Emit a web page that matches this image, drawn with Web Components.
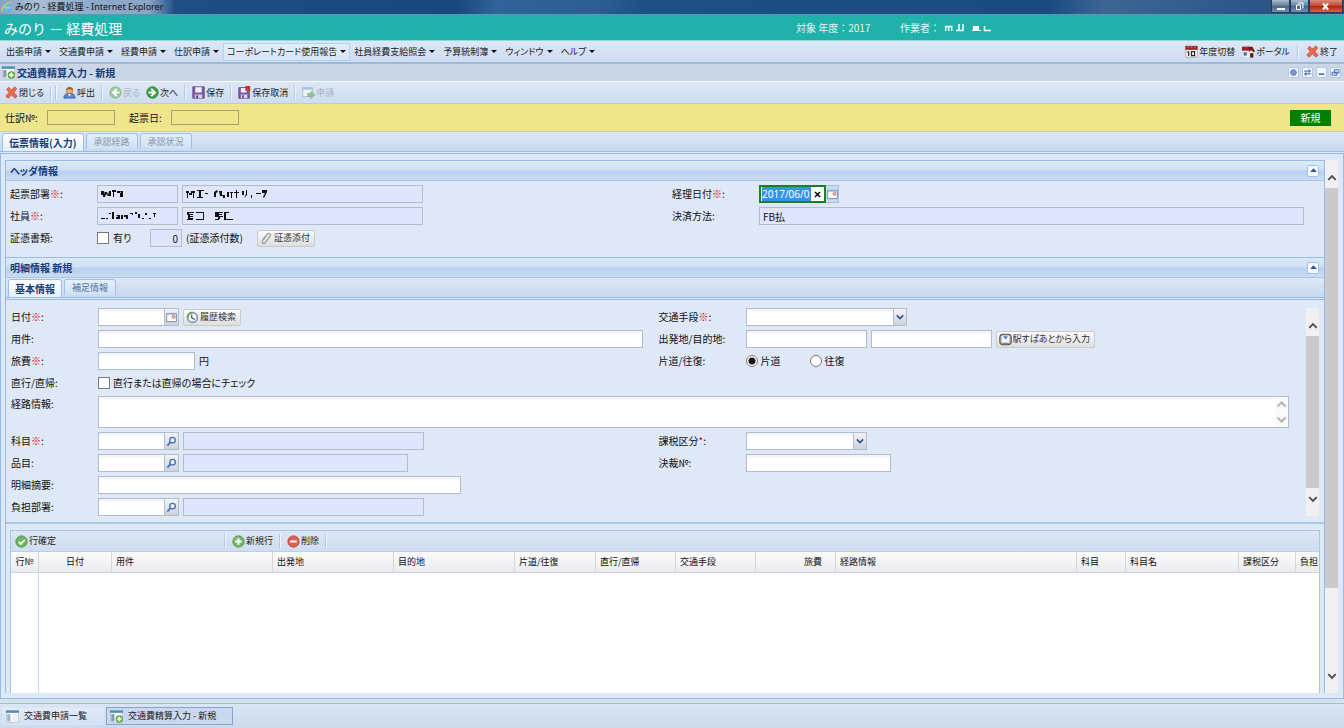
<!DOCTYPE html>
<html lang="ja">
<head>
<meta charset="utf-8">
<title>みのり - 経費処理</title>
<style>
html, body { margin: 0; height: 100%; }
body { font: 9px/12px "Noto Sans CJK JP", sans-serif; font-feature-settings: "palt"; color: #222; background: #d3e1f1; }
</style>
</head>
<body>
<expense-app></expense-app>

<script>
const BASE = `
  *, *::before, *::after { box-sizing: border-box; }
  :host { display: block; }
  :host([hidden]) { display: none; }
  button, input, select, textarea { font: inherit; color: inherit; margin: 0; border-radius: 0; font-feature-settings: inherit; }
  button { background: none; border: 0; padding: 0; display: flex; align-items: center; white-space: nowrap; }
`;
function define(name, css, html) {
  customElements.define(name, class extends HTMLElement {
    constructor() {
      super();
      const t = document.createElement('template');
      t.innerHTML = `<style>${BASE}${css}</style>` + (typeof html === 'function' ? html(this) : html);
      this.attachShadow({ mode: 'open' }).append(t.content.cloneNode(true));
    }
  });
}

/* ---------- icons, drawn on a 16 unit square ---------- */
const ICONS = {
  ie: '<circle cx="8" cy="9" r="5" fill="none" stroke="#5db9ea" stroke-width="2.6"/><path d="M4 9h9" stroke="#8ed3f4" stroke-width="2"/><path d="M1 14C-1 10 9 0 15 2" fill="none" stroke="#e8c34a" stroke-width="1.6"/>',
  cross: '<path d="M2 4l2.500-2.500L8 5l4-4 2.500 2.500L11 8l4 4.500-2.500 2.500L8 11l-4 4-3-2.500L5 8z" fill="#ea6a4e" stroke="#c4402c" stroke-width=".8"/>',
  user: '<path d="M1 15c0-4 2-6 7-6s7 2 7 6z" fill="#5586c8" stroke="#345f9c" stroke-width=".8"/><circle cx="8" cy="5.500" r="4" fill="#efb27a" stroke="#99602c" stroke-width=".8"/><path d="M3.800 5C4 1 12 0 12.300 5 9 5 8 3 3.800 5z" fill="#a35a22"/><path d="M6 10l2 3 2-3z" fill="#fff"/>',
  back: '<circle cx="8" cy="8" r="7" fill="#9bc79d" stroke="#89b58b"/><path d="M9.500 3.500L5 8l4.500 4.500M5.500 8H13" fill="none" stroke="#fff" stroke-width="2.400"/>',
  next: '<circle cx="8" cy="8" r="7" fill="#3fa345" stroke="#26752c"/><path d="M6.500 3.500L11 8l-4.500 4.500M10.500 8H3" fill="none" stroke="#fff" stroke-width="2.400"/>',
  save: '<path d="M1 1h14v14H1z" fill="#7d5ca6" stroke="#5d3f86"/><path d="M4 1.500h8V8H4z" fill="#f1edf8"/><path d="M3.500 10.500h9V15h-9z" fill="#d9d5e6"/><path d="M5 11.500h2.500V15H5z" fill="#5d3f86"/>',
  unsave: '<path d="M1 2h13v13H1z" fill="#7d5ca6" stroke="#5d3f86"/><path d="M3.500 2.500h7V8h-7z" fill="#f1edf8"/><path d="M3.500 10.500h8V15h-8z" fill="#d9d5e6"/><path d="M5 11.500h2V15H5z" fill="#5d3f86"/><path d="M9 0h6v7l-3-2-3 1z" fill="#cf3030"/>',
  apply: '<path d="M1 2h12v11H1z" fill="#eef3fa" stroke="#a5b7d0"/><path d="M1 2h12v2.500H1z" fill="#a9c1de"/><path d="M7 9h4V6.500l5 4.500-5 4.500V13H7z" fill="#93c191" stroke="#79a878" stroke-width=".6"/>',
  list: '<path d="M.500 1h15v14H.500z" fill="#fbfcfe" stroke="#b4c3d6"/><path d="M0 .500h16v3H0z" fill="#4c8eae"/><path d="M1.500 5h4v9h-4z" fill="#a4b4c8"/><path d="M8 5h6v9H8z" fill="#eceff4"/>',
  listadd: '<path d="M.500 1h15v14H.500z" fill="#fbfcfe" stroke="#b4c3d6"/><path d="M0 .500h16v3H0z" fill="#4c8eae"/><path d="M1.500 5h4v9h-4z" fill="#8599b5"/><circle cx="11.500" cy="11" r="4.300" fill="#77bb55" stroke="#4e9138" stroke-width=".8"/><path d="M11.500 8.300v5.400M8.800 11h5.400" stroke="#fff" stroke-width="1.800"/>',
  calendar: '<path d="M1 2h14v13H1z" fill="#fff" stroke="#a99"/><path d="M.500 1h15v5H.500z" fill="#a32129"/><path d="M3 2.500h2M7 2.500h2M11 2.500h2" stroke="#e9a3a5"/><path d="M4.500 8v5.500M3 8.800l1.500-.8M8 8.200h3.800v5H8z" fill="none" stroke="#222" stroke-width="1.500"/>',
  portal: '<path d="M1 7h14v8H1z" fill="#f1ecea"/><path d="M0 2h9v5H0z" fill="#a0202c"/><path d="M8 2h5l3 6-2 1-3-3-2 3z" fill="#7c1822"/><path d="M2 9h4v4H2z" fill="#4b6fa6"/><path d="M10 10h4v5.500h-4z" fill="#5a1c1c"/>',
  gear: '<circle cx="8" cy="8" r="5" fill="#8293d2" stroke="#6278bd" stroke-width="2.400" stroke-dasharray="2 1"/>',
  swap: '<path d="M2 5.500h9M5 10.500h9" stroke="#5379b8" stroke-width="2"/><path d="M10 1.500l4.500 4-4.500 4zM6 6.500l-4.500 4 4.500 4z" fill="#5379b8"/>',
  min: '<path d="M3 9.500h10v3H3z" fill="#4e70b4"/>',
  restore: '<path d="M6 3h8v6H6zM2 7.500h8.500V13H2z" fill="#dfe9f8" stroke="#4e70b4" stroke-width="1.800"/>',
  collapse: '<path d="M8 4l6 6.500H2z" fill="#2d559d"/>',
  clip: '<path d="M3 10l6-7.500c2-2 5 0 3.500 2.500l-6 8c-1.500 2-5 .5-3.500-2l5-6.500" fill="none" stroke="#9c9c9c" stroke-width="1.600"/>',
  history: '<circle cx="8" cy="8" r="6" fill="#f6f9fc" stroke="#7f9eb4" stroke-width="2.200"/><path d="M2 8a6 6 0 0 1 6-6" fill="none" stroke="#62a657" stroke-width="2.600"/><path d="M7 4.500v4l4 2" fill="none" stroke="#45586c" stroke-width="1.500"/>',
  train: '<rect x="1" y="1.500" width="14" height="13" rx="4" fill="#bdbdbd" stroke="#4f4f4f" stroke-width="1.400"/><path d="M3.500 3.500h9v8h-9z" fill="#f5f7fa"/><path d="M5 4h6l-3 4z" fill="#4c7bb4"/><path d="M4 13h8" stroke="#777"/>',
  date: '<path d="M1 2h14v12H1z" fill="#fff" stroke="#7488ac" stroke-width="1.400"/><path d="M1.500 3h13" stroke="#9db3d4" stroke-width="2"/><circle cx="11" cy="7" r="2.200" fill="#f4c9c9" stroke="#b84848"/>',
  search: '<circle cx="9.500" cy="6" r="4" fill="#e9f3fd" stroke="#4674b1" stroke-width="2"/><path d="M6.500 9L2 14" stroke="#4674b1" stroke-width="2.600"/>',
  ok: '<circle cx="8" cy="8" r="7" fill="#6cb65f" stroke="#4b8f45"/><path d="M4.500 8.500l2.500 2.500 5-5" fill="none" stroke="#fff" stroke-width="2.200"/>',
  add: '<circle cx="8" cy="8" r="7" fill="#76b86b" stroke="#4b8f45"/><path d="M8 4v8M4 8h8" stroke="#fff" stroke-width="2.400"/>',
  remove: '<circle cx="8" cy="8" r="7" fill="#dd6156" stroke="#b2453e"/><path d="M4 8h8" stroke="#fff" stroke-width="2.600"/>',
  up: '<path d="M3 10.500l5-5 5 5" fill="none" stroke="currentColor" stroke-width="2.600"/>',
  down: '<path d="M3 5.500l5 5 5-5" fill="none" stroke="currentColor" stroke-width="2.600"/>',
  times: '<path d="M3.500 3.500l9 9M12.500 3.500l-9 9" stroke="currentColor" stroke-width="2.600"/>',
};
define('ui-icon', `
  :host { width: var(--icon, 13px); height: var(--icon, 13px); flex: none; }
  svg { display: block; width: 100%; height: 100%; }
`, host => `<svg viewBox="0 0 16 16" aria-hidden="true"></svg>`);
/* Icon bodies depend on the name attribute, so they are filled in once the tree is built. */
function paintIcons(root) {
  root.querySelectorAll('*').forEach(el => {
    if (el.localName === 'ui-icon') el.shadowRoot.querySelector('svg').innerHTML = ICONS[el.getAttribute('name')] || '';
    if (el.shadowRoot) paintIcons(el.shadowRoot);
  });
}

/* ---------- browser title bar ---------- */
define('app-titlebar', `
  :host { display: flex; justify-content: space-between; height: 15px; border-bottom: 1px solid #5f97ae;
    background: linear-gradient(100deg, #23508a 0, #1a4780 34%, #30639b 37%, #2b5c95 45%, #1b4f86 48%, #1a4b80 78%, #3d6695 82%, #1f4d80 100%); }
  .title { display: flex; align-items: center; gap: 2px; padding: 0 12px 0 1px; color: #111; --icon: 12px;
    font-family: "Noto Sans", "Noto Sans CJK JP", sans-serif;
    background: linear-gradient(90deg, #86a2c4, #a9bdd6 20%, #8fa9c9 55%, #8aa5c6 85%, transparent); }
  .controls { display: flex; height: 13px; padding-right: 1px; }
  .controls button { width: 19px; justify-content: center; color: #fff; border: 1px solid #263c5c; border-top: 0;
    background: linear-gradient(#a9bccf, #5f7b9a 50%, #46658b 51%, #7391b0); --icon: 10px; }
  .controls .close { width: 34px; background: linear-gradient(#dc8c7c, #c1442f 50%, #a72411 51%, #d06a4a); }
  svg { width: 10px; height: 9px; }
`, `
  <div class="title"><ui-icon name="ie"></ui-icon><span>みのり - 経費処理 - Internet Explorer</span></div>
  <div class="controls">
    <button aria-label="最小化"><svg viewBox="0 0 10 9"><path d="M1 6h8v2H1z" fill="#fff"/></svg></button>
    <button aria-label="元に戻す"><svg viewBox="0 0 10 9"><path d="M3 1h5v5H7M1.500 3h4v4.500h-4z" fill="none" stroke="#fff"/></svg></button>
    <button class="close" aria-label="閉じる"><svg viewBox="0 0 10 9"><path d="M2 1.500l5 6M7 1.500l-5 6" stroke="#fff" stroke-width="2"/></svg></button>
  </div>`);

/* ---------- teal application banner ---------- */
define('app-banner', `
  :host { display: grid; grid-template-columns: 796fr 104fr 444fr; align-items: center; height: 26px; background: #20b2aa;
    color: #fff; border-bottom: 1px solid #8fd8dc; font-feature-settings: normal; }
  h1 { margin: 0; padding-left: 4px; font-weight: 400; font-size: 14px; line-height: 20px; }
  p { margin: 0; font-size: 10px; line-height: 14px; white-space: nowrap; color: #e4f7f5; display: flex; align-items: center; gap: 4px; }
  svg { width: 48px; height: 9px; }
`, `
  <h1>みのり － 経費処理</h1>
  <p>対象 年度：2017</p>
  <p>作業者：
    <svg viewBox="0 0 48 9" role="img" aria-label="作業者名"><g fill="none" stroke="#fff" stroke-width="1.500"><path d="M1.700 8V3.500h6V8M4.700 4v4M12 7.500h3V1M16 7.500h3V1"/><path d="M40.500 3v4.500H47"/></g><path d="M29 3h6v4h2v1h-9V7h1z" fill="#fff"/></svg>
  </p>`);

/* ---------- menus ---------- */
define('menu-item', `
  button { height: 18px; padding: 0 3px; gap: 3px; border: 1px solid transparent; }
  button::after { content: ""; border: 3px solid transparent; border-top-color: #111; border-bottom: 0; }
  :host([active]) button { border-color: #b4d0ee; background: linear-gradient(#e3eefb, #d5e5f8); }
`, '<button aria-haspopup="menu"><slot></slot></button>');

define('tool-button', `
  button { gap: 1px; height: 18px; }
  button:disabled { color: #a9b3c1; }
`, host => `<button ${host.hasAttribute('disabled') ? 'disabled' : ''}><ui-icon name="${host.getAttribute('icon')}"></ui-icon><span><slot></slot></span></button>`);

define('tool-sep', `
  :host { width: 2px; height: 14px; flex: none; border-left: 1px solid #afc8e6; border-right: 1px solid #f0f6fd; }
`, '');

define('app-menubar', `
  :host { display: flex; align-items: center; height: 23px; padding: 0 6px 0 2px; border-bottom: 2px solid #a0b8d8;
    background: linear-gradient(#dce8f6, #cedcf0); }
  .tools { margin-left: auto; display: flex; align-items: center; gap: 7px; }
`, `
  <menu-item>出張申請</menu-item><menu-item>交通費申請</menu-item><menu-item>経費申請</menu-item><menu-item>仕訳申請</menu-item>
  <menu-item active>コーポレートカード使用報告</menu-item><menu-item>社員経費支給照会</menu-item><menu-item>予算統制簿</menu-item>
  <menu-item>ウィンドウ</menu-item><menu-item>ヘルプ</menu-item>
  <div class="tools">
    <tool-button icon="calendar">年度切替</tool-button><tool-button icon="portal">ポータル</tool-button>
    <tool-sep></tool-sep><tool-button icon="cross">終了</tool-button>
  </div>`);

/* ---------- inner window ---------- */
define('window-header', `
  :host { display: flex; align-items: center; gap: 2px; height: 18px; padding: 0 3px 0 2px; background: #cbd6e7;
    border-bottom: 1px solid #f2f7fc; }
  h2 { margin: 0; font-size: 10px; line-height: 14px; font-weight: 700; color: #163c7c; }
  nav { margin-left: auto; display: flex; gap: 3px; --icon: 9px; }
  nav button { width: 11px; height: 11px; justify-content: center; background: #f3f8fe; border: 1px solid #adc8ea; border-radius: 2px; }
`, `
  <ui-icon name="listadd"></ui-icon><h2>交通費精算入力 - 新規</h2>
  <nav aria-label="ウィンドウ操作">
    <button aria-label="設定"><ui-icon name="gear"></ui-icon></button><button aria-label="更新"><ui-icon name="swap"></ui-icon></button>
    <button aria-label="最小化"><ui-icon name="min"></ui-icon></button><button aria-label="元に戻す"><ui-icon name="restore"></ui-icon></button>
  </nav>`);

define('window-toolbar', `
  :host { display: flex; align-items: center; gap: 6px; height: 22px; padding-left: 5px; border-bottom: 1px solid #c0cbd0;
    background: linear-gradient(#dde8f6, #cfdcef); }
  .pair { display: flex; gap: 3px; }
`, `
  <tool-button icon="cross">閉じる</tool-button><div class="pair"><tool-sep></tool-sep><tool-sep></tool-sep></div>
  <tool-button icon="user">呼出</tool-button><tool-sep></tool-sep>
  <tool-button icon="back" disabled>戻る</tool-button><tool-button icon="next">次へ</tool-button><tool-sep></tool-sep>
  <tool-button icon="save">保存</tool-button><tool-sep></tool-sep>
  <tool-button icon="unsave">保存取消</tool-button><tool-sep></tool-sep>
  <tool-button icon="apply" disabled>申請</tool-button>`);

define('voucher-strip', `
  :host { display: flex; align-items: center; height: 28px; padding: 0 13px 0 5px; background: #efe68c;
    border-bottom: 1px solid #c9cda8; font-size: 10px; color: #111; }
  label { width: 42px; }
  input { width: 68px; height: 15px; padding: 0 3px; border: 1px solid #a8a074; background: transparent; margin-right: 14px; }
  output { margin-left: auto; width: 41px; height: 16px; line-height: 15px; text-align: center; background: #008000; color: #fff; }
`, `
  <label for="no">仕訳№:</label><input id="no" readonly>
  <label for="day">起票日:</label><input id="day" readonly>
  <output>新規</output>`);

/* ---------- tabs ---------- */
define('tab-item', `
  button { height: 100%; padding: 0 7px; border: 1px solid #a0bfe4; border-bottom: 0; border-radius: 3px 3px 0 0;
    color: #8795a8; background: linear-gradient(#e4effb, #cfe0f4); }
  :host { height: 16px; }
  :host([sub]) button { color: #51729f; }
  :host([active]) { height: 18px; }
  :host([active]) button { padding: 0 6px; font-weight: 700; font-size: 10px; color: #163c7c; background: linear-gradient(#fff, #e4eefa); }
`, '<button role="tab"><slot></slot></button>');

define('tab-strip', `
  :host { display: flex; gap: 2px; align-items: flex-start; height: 22px; padding: 1px 2px 0; border-bottom: 3px double #99bbe8;
    background: linear-gradient(#dde7f5, #c9d9ee); }
`, '<slot></slot>');

/* ---------- collapsible panel ---------- */
define('section-panel', `
  :host { border: 1px solid #99bbe8; }
  header { display: flex; justify-content: space-between; align-items: center; height: 20px; padding: 0 5px 0 4px;
    border-bottom: 1px solid #a8c5e8; background: linear-gradient(#dceaf6, #cfe0f3 48%, #b8d0ee 52%, #cadcf3); }
  h3 { margin: 0; font-size: 10px; line-height: 14px; color: #163c7c; }
  header button { width: 12px; height: 12px; justify-content: center; background: #f5faff; border: 1px solid #a3c1e5; border-radius: 2px; --icon: 9px; }
`, `<header><h3><slot name="title"></slot></h3><button aria-label="折りたたむ"><ui-icon name="collapse"></ui-icon></button></header><slot></slot>`);

define('scroll-rail', `
  :host { display: flex; flex-direction: column; width: 13px; flex: none; background: #f0f0f0; color: #505050; }
  button { height: 28px; flex: none; justify-content: center; padding-top: 7px; --icon: 12px; }
  button:last-child { padding: 0 0 6px; }
  i { background: #cacaca; flex: var(--thumb, 1) 1 0; }
  b { flex: var(--rest, 0) 1 0; }
`, `<button aria-label="上へスクロール"><ui-icon name="up"></ui-icon></button><i></i><b></b><button aria-label="下へスクロール"><ui-icon name="down"></ui-icon></button>`);

/* ---------- form styles shared by both forms ---------- */
const FORM = `
  .grid { display: grid; gap: 4px 0; font-size: 10px; color: #111; }
  .row { display: flex; align-items: center; height: 18px; gap: 4px; min-width: 0; }
  .row > .cap { width: 87px; flex: none; margin-right: -4px; white-space: nowrap; }
  .req { color: #d00; }
  input:not([type=checkbox]):not([type=radio]), textarea, select { height: 18px; padding: 0 3px; border: 1px solid #b2bccf;
    background: #fff linear-gradient(#f0f1f4, #fff 4px); min-width: 0; outline: 0; }
  input[readonly]:not([type=checkbox]) { background: #dfe5fd; }
  input[type=checkbox], input[type=radio] { appearance: none; width: 12px; height: 12px; flex: none; border: 1px solid #777; background: #fff; }
  input[type=radio] { border-radius: 50%; }
  input[type=radio]:checked { background: radial-gradient(#111 3px, #fff 4px); }
  .w-code { width: 81px; } .w-mid { width: 121px; } .w-name { width: 241px; } .w-num { width: 32px; text-align: right; }
  .pick { display: flex; width: 81px; flex: none; }
  .pick input { width: 67px; }
  .pick button { width: 14px; height: 18px; justify-content: center; border: 1px solid #b2bccf; border-left: 0;
    background: linear-gradient(#f2f3f5, #cfd2d8); --icon: 11px; }
  .btn { height: 17px; padding: 0 4px 0 2px; gap: 1px; font-size: 9px; color: #333; border: 1px solid #c9c9c9; border-radius: 2px;
    background: linear-gradient(#fafafa, #dedede); }
  .masked { position: relative; display: flex; }
  .masked svg { position: absolute; left: 4px; top: 4px; height: 10px; pointer-events: none; }
`;

define('header-form', FORM + `
  :host { padding: 4px 20px 10px 4px; }
  .grid { grid-template-columns: calc(50% + 15px) 1fr; }
  .wide { flex: 1; }
  .focus { display: flex; width: 67px; height: 18px; border: 2px solid #1c7d2c; background: #fff; }
  .focus input:not([type=checkbox]):not([type=radio]) { width: 49px; height: 14px; padding: 0; margin-left: 1px; border: 0; background: #3393f0; color: #fff;
    font-family: "Noto Sans", sans-serif; line-height: 14px; }
  .focus button { flex: 1; height: 14px; justify-content: center; color: #000; --icon: 9px; }
  .focus + .pick { width: 13px; margin-left: -4px; }
  .focus + .pick button { width: 13px; background: #c6daf2; }
  .has { width: 49px; display: flex; align-items: center; gap: 4px; }
  .attach { margin-left: 10px; }
  .count { width: 57px; white-space: nowrap; }
`, `
  <div class="grid">
    <div class="row"><label class="cap" for="dept">起票部署<span class="req">※</span>:</label>
      <span class="masked"><input id="dept" class="w-code" readonly><svg width="24" viewBox="0 0 24 10" aria-hidden="true"><path d="M0 2h3l1 3V3h2l1 3 1-4h2v5H7L5 5 4 8H2V6H0zM11 1h4v2h-2v5h-1V3h-1zM16 2h3v2h-3zM19 2h3v6h-3V4h1z" fill="#111"/></svg></span>
      <span class="masked"><input aria-label="起票部署名" class="w-name" readonly><svg width="82" viewBox="0 0 82 10" aria-hidden="true"><path d="M0 2h3v2h2V2h4v2H8v5H7V4H6v2H3V4H2v5H1V4H0zM11 1h7v1h-3v6h2v1h-6V8h2V2h-2zM19 4h3v1h-3zM28 3l3-2 1 2-2 1v4h-2zM33 2h3v4h3v3h-2V7h-3zM41 3h2v5h-2zM44 3h3v1h-1v5h-1V4h-1zM50 1h1v2h2v1h-2v5h-1V4h-2V3h2zM56 2h2v4h-2zM60 1h1v5l-3 3 2-4zM65 6h1v3h-1zM70 4h5v1h-5zM76 1h5v2l-3 6-1-1 2-4h-3z" fill="#111"/></svg></span></div>
    <div class="row"><label class="cap" for="acct">経理日付<span class="req">※</span>:</label>
      <span class="focus"><input id="acct" value="2017/06/0"><button aria-label="クリア"><ui-icon name="times"></ui-icon></button></span>
      <span class="pick"><button aria-label="カレンダー"><ui-icon name="date"></ui-icon></button></span></div>
    <div class="row"><label class="cap" for="emp">社員<span class="req">※</span>:</label>
      <span class="masked"><input id="emp" class="w-code" readonly><svg width="56" viewBox="0 0 56 10" aria-hidden="true"><path d="M0 7h4v1H0zM5 7h2v1H5zM8 2h2v1H8zM11 1h2v7h-2zM15 4h4v4h-4V6h2zM20 4h2v4h-2zM23 4h4v4h-2V6h-2zM29 2h3v2h-1V3h-2zM34 1h2v2h-2zM37 3h2v4h-2zM41 7h2v1h-2zM44 2h2v2h-2zM48 7h2v1h-2zM52 2h3v1h-1v3h-1V3h-1z" fill="#111"/></svg></span>
      <span class="masked"><input aria-label="社員名" class="w-name" readonly><svg width="50" viewBox="0 0 50 10" aria-hidden="true"><path d="M1 1h7v1H3v1h4v1H4v1h3v1H4v1h3v2H1V8h1V4H1zM10 1h8v8h-8V8h7V2h-7zM29 1h8v1h-4v1h3v1h-3v1h4v1h-3v2h-2V6h-3zM38 1h5v1h-3v6h7v1h-9zM29 8h4v1h-4z" fill="#111"/></svg></span></div>
    <div class="row"><label class="cap" for="pay">決済方法:</label><input id="pay" class="wide" value="FB払" readonly></div>
    <div class="row"><span class="cap">証憑書類:</span>
      <label class="has"><input type="checkbox">有り</label>
      <input class="w-num" aria-label="証憑添付数" value="0" readonly><span class="count">(証憑添付数)</span>
      <button class="btn attach"><ui-icon name="clip"></ui-icon>証憑添付</button></div>
  </div>`);

define('detail-form', FORM + `
  :host { display: flex; padding: 8px 5px 6px; border-bottom: 2px solid #a8c6ec; }
  .grid { flex: 1; grid-template-columns: 1fr 1fr; min-width: 0; }
  .full { grid-column: 1 / -1; height: 32px; align-items: flex-start; padding-right: 17px; }
  .full .cap { padding-top: 2px; }
  .area { position: relative; flex: 1; display: flex; }
  .area textarea { flex: 1; height: 32px; resize: none; overflow: hidden; }
  .area span { position: absolute; right: 1px; top: 1px; bottom: 1px; width: 13px; display: flex; flex-direction: column; justify-content: space-around;
    background: #fafafa; color: #b5b5b5; --icon: 13px; }
  .w-long { width: 545px; } .w-memo { width: 363px; } .w-fare { width: 97px; } .w-item { width: 225px; } .w-dec { width: 145px; } .w-tr { width: 161px; }
  .sel { position: relative; display: flex; }
  .sel select { appearance: none; }
  .sel ui-icon { position: absolute; right: 0; top: 0; width: 14px; height: 18px; padding: 3px 1px; border: 1px solid #b2bccf;
    background: linear-gradient(#f2f3f5, #cfd2d8); color: #2c4e8c; pointer-events: none; }
  .opt { display: flex; align-items: center; gap: 3px; width: 60px; }
  .gap { gap: 3px; display: flex; align-items: center; }
`, `
  <div class="grid">
    <div class="row"><label class="cap" for="date">日付<span class="req">※</span>:</label>
      <span class="pick"><input id="date"><button aria-label="カレンダー"><ui-icon name="date"></ui-icon></button></span>
      <button class="btn"><ui-icon name="history"></ui-icon>履歴検索</button></div>
    <div class="row"><label class="cap" for="means">交通手段<span class="req">※</span>:</label>
      <span class="sel"><select id="means" class="w-tr"><option></option></select><ui-icon name="down"></ui-icon></span></div>
    <div class="row"><label class="cap" for="biz">用件:</label><input id="biz" class="w-long"></div>
    <div class="row"><label class="cap" for="from">出発地/目的地:</label><input id="from" class="w-mid"><input class="w-mid" aria-label="目的地">
      <button class="btn"><ui-icon name="train"></ui-icon>駅すぱあとから入力</button></div>
    <div class="row"><label class="cap" for="fare">旅費<span class="req">※</span>:</label><input id="fare" class="w-fare">円</div>
    <div class="row"><span class="cap">片道/往復:</span>
      <label class="opt"><input type="radio" name="way" checked>片道</label><label class="opt"><input type="radio" name="way">往復</label></div>
    <div class="row"><span class="cap">直行/直帰:</span><label class="gap"><input type="checkbox">直行または直帰の場合にチェック</label></div>
    <div></div>
    <div class="row full"><label class="cap" for="route">経路情報:</label>
      <div class="area"><textarea id="route"></textarea><span><ui-icon name="up"></ui-icon><ui-icon name="down"></ui-icon></span></div></div>
    <div class="row"><label class="cap" for="subj">科目<span class="req">※</span>:</label>
      <span class="pick"><input id="subj"><button aria-label="科目検索"><ui-icon name="search"></ui-icon></button></span><input class="w-name" aria-label="科目名" readonly></div>
    <div class="row"><label class="cap" for="tax">課税区分<span class="req">*</span>:</label>
      <span class="sel"><select id="tax" class="w-mid"><option></option></select><ui-icon name="down"></ui-icon></span></div>
    <div class="row"><label class="cap" for="item">品目:</label>
      <span class="pick"><input id="item"><button aria-label="品目検索"><ui-icon name="search"></ui-icon></button></span><input class="w-item" aria-label="品目名" readonly></div>
    <div class="row"><label class="cap" for="dec">決裁№:</label><input id="dec" class="w-dec"></div>
    <div class="row"><label class="cap" for="memo">明細摘要:</label><input id="memo" class="w-memo"></div>
    <div></div>
    <div class="row"><label class="cap" for="burden">負担部署:</label>
      <span class="pick"><input id="burden"><button aria-label="負担部署検索"><ui-icon name="search"></ui-icon></button></span><input class="w-name" aria-label="負担部署名" readonly></div>
  </div>
  <scroll-rail></scroll-rail>`);

/* ---------- line item grid ---------- */
const COLS = [['行№', 28, 'mid'], ['日付', 73, 'mid'], ['用件', 161], ['出発地', 121], ['目的地', 121], ['片道/往復', 81], ['直行/直帰', 80],
  ['交通手段', 80], ['旅費', 80, 'end'], ['経路情報', 241], ['科目', 49], ['科目名', 113], ['課税区分', 57], ['負担', 0]];
define('item-grid', `
  :host { display: flex; flex-direction: column; min-height: 0; border: 1px solid #a8c5e8; border-bottom: 0; background: #fff; overflow: hidden; }
  .bar { display: flex; align-items: center; gap: 6px; height: 21px; flex: none; padding-left: 4px; background: linear-gradient(#dbe6f5, #cfddf0);
    border-bottom: 1px solid #bccfe8; }
  .lead { width: 203px; }
  .body { flex: 1; min-height: 0; overflow: hidden; }
  table { table-layout: fixed; width: 100%; height: 100%; border-collapse: separate; border-spacing: 0; color: #111; }
  th { height: 21px; padding: 0 0 0 4px; font-weight: 400; text-align: left; white-space: nowrap; overflow: hidden;
    border-right: 1px solid #d3d6da; border-bottom: 1px solid #cfd2d6; background: linear-gradient(#fbfbfb, #e9ebee); }
  th.mid { text-align: center; padding: 0; } th.end { text-align: right; padding-right: 13px; }
  td { padding: 0; } td:first-child { border-right: 1px solid #c8d9ec; }
  th:last-child { border-right: 0; }
`, `
  <div class="bar"><div class="lead"><tool-button icon="ok">行確定</tool-button></div><tool-sep></tool-sep>
    <tool-button icon="add">新規行</tool-button><tool-sep></tool-sep><tool-button icon="remove">削除</tool-button><tool-sep></tool-sep></div>
  <div class="body"><table>
    <colgroup>${COLS.map(c => `<col${c[1] ? ` style="width:${c[1]}px"` : ''}>`).join('')}</colgroup>
    <thead><tr>${COLS.map(c => `<th scope="col" class="${c[2] || ''}">${c[0]}</th>`).join('')}</tr></thead>
    <tbody><tr>${COLS.map(() => '<td></td>').join('')}</tr></tbody></table></div>`);

/* ---------- task bar ---------- */
define('task-item', `
  button { height: 18px; padding: 0 16px 0 3px; gap: 5px; border: 1px solid #d9e6f6; background: linear-gradient(#e1ebf9, #d3e1f4); }
  :host([active]) button { border-color: #8aa3cc; background: #c9d8ee; }
`, host => `<button><ui-icon name="${host.getAttribute('icon')}"></ui-icon><slot></slot></button>`);

define('task-bar', `
  :host { display: flex; align-items: center; gap: 2px; height: 25px; padding-left: 2px; border-top: 1px solid #a9bacb;
    background: linear-gradient(#dae6f4, #cbdaeb); }
`, `<task-item icon="list">交通費申請一覧</task-item><task-item icon="listadd" active>交通費精算入力 - 新規</task-item>`);

/* ---------- whole page ---------- */
define('expense-app', `
  :host { display: flex; flex-direction: column; min-height: 100vh; }
  main { flex: 1; display: flex; flex-direction: column; margin-bottom: 4px; border: 1px solid #99bbe8; border-top: 0; background: #dfe8f6; }
  .work { flex: 1; display: flex; padding: 6px 5px 5px 4px; }
  .content { flex: 1; min-width: 0; display: flex; flex-direction: column; background: #dfe8f6; }
  .detail { flex: 1; display: flex; flex-direction: column; border: 1px solid #99bbe8; border-width: 0 1px; }
  .detail section-panel { border-width: 0; }
  item-grid { flex: 1 1 120px; margin: 6px 4px 0; }
  .outer { --thumb: 400; --rest: 77; }
`, `
  <app-titlebar></app-titlebar><app-banner></app-banner><app-menubar></app-menubar>
  <window-header></window-header><window-toolbar></window-toolbar><voucher-strip></voucher-strip>
  <tab-strip><tab-item active>伝票情報(入力)</tab-item><tab-item>承認経路</tab-item><tab-item>承認状況</tab-item></tab-strip>
  <main><div class="work">
    <div class="content">
      <section-panel><span slot="title">ヘッダ情報</span><header-form></header-form></section-panel>
      <div class="detail">
        <section-panel><span slot="title">明細情報 新規</span>
          <tab-strip><tab-item sub active>基本情報</tab-item><tab-item sub>補足情報</tab-item></tab-strip>
          <detail-form></detail-form></section-panel>
        <item-grid></item-grid>
      </div>
    </div>
    <scroll-rail class="outer"></scroll-rail>
  </div></main>
  <task-bar></task-bar>`);

paintIcons(document);
</script>
</body>
</html>
